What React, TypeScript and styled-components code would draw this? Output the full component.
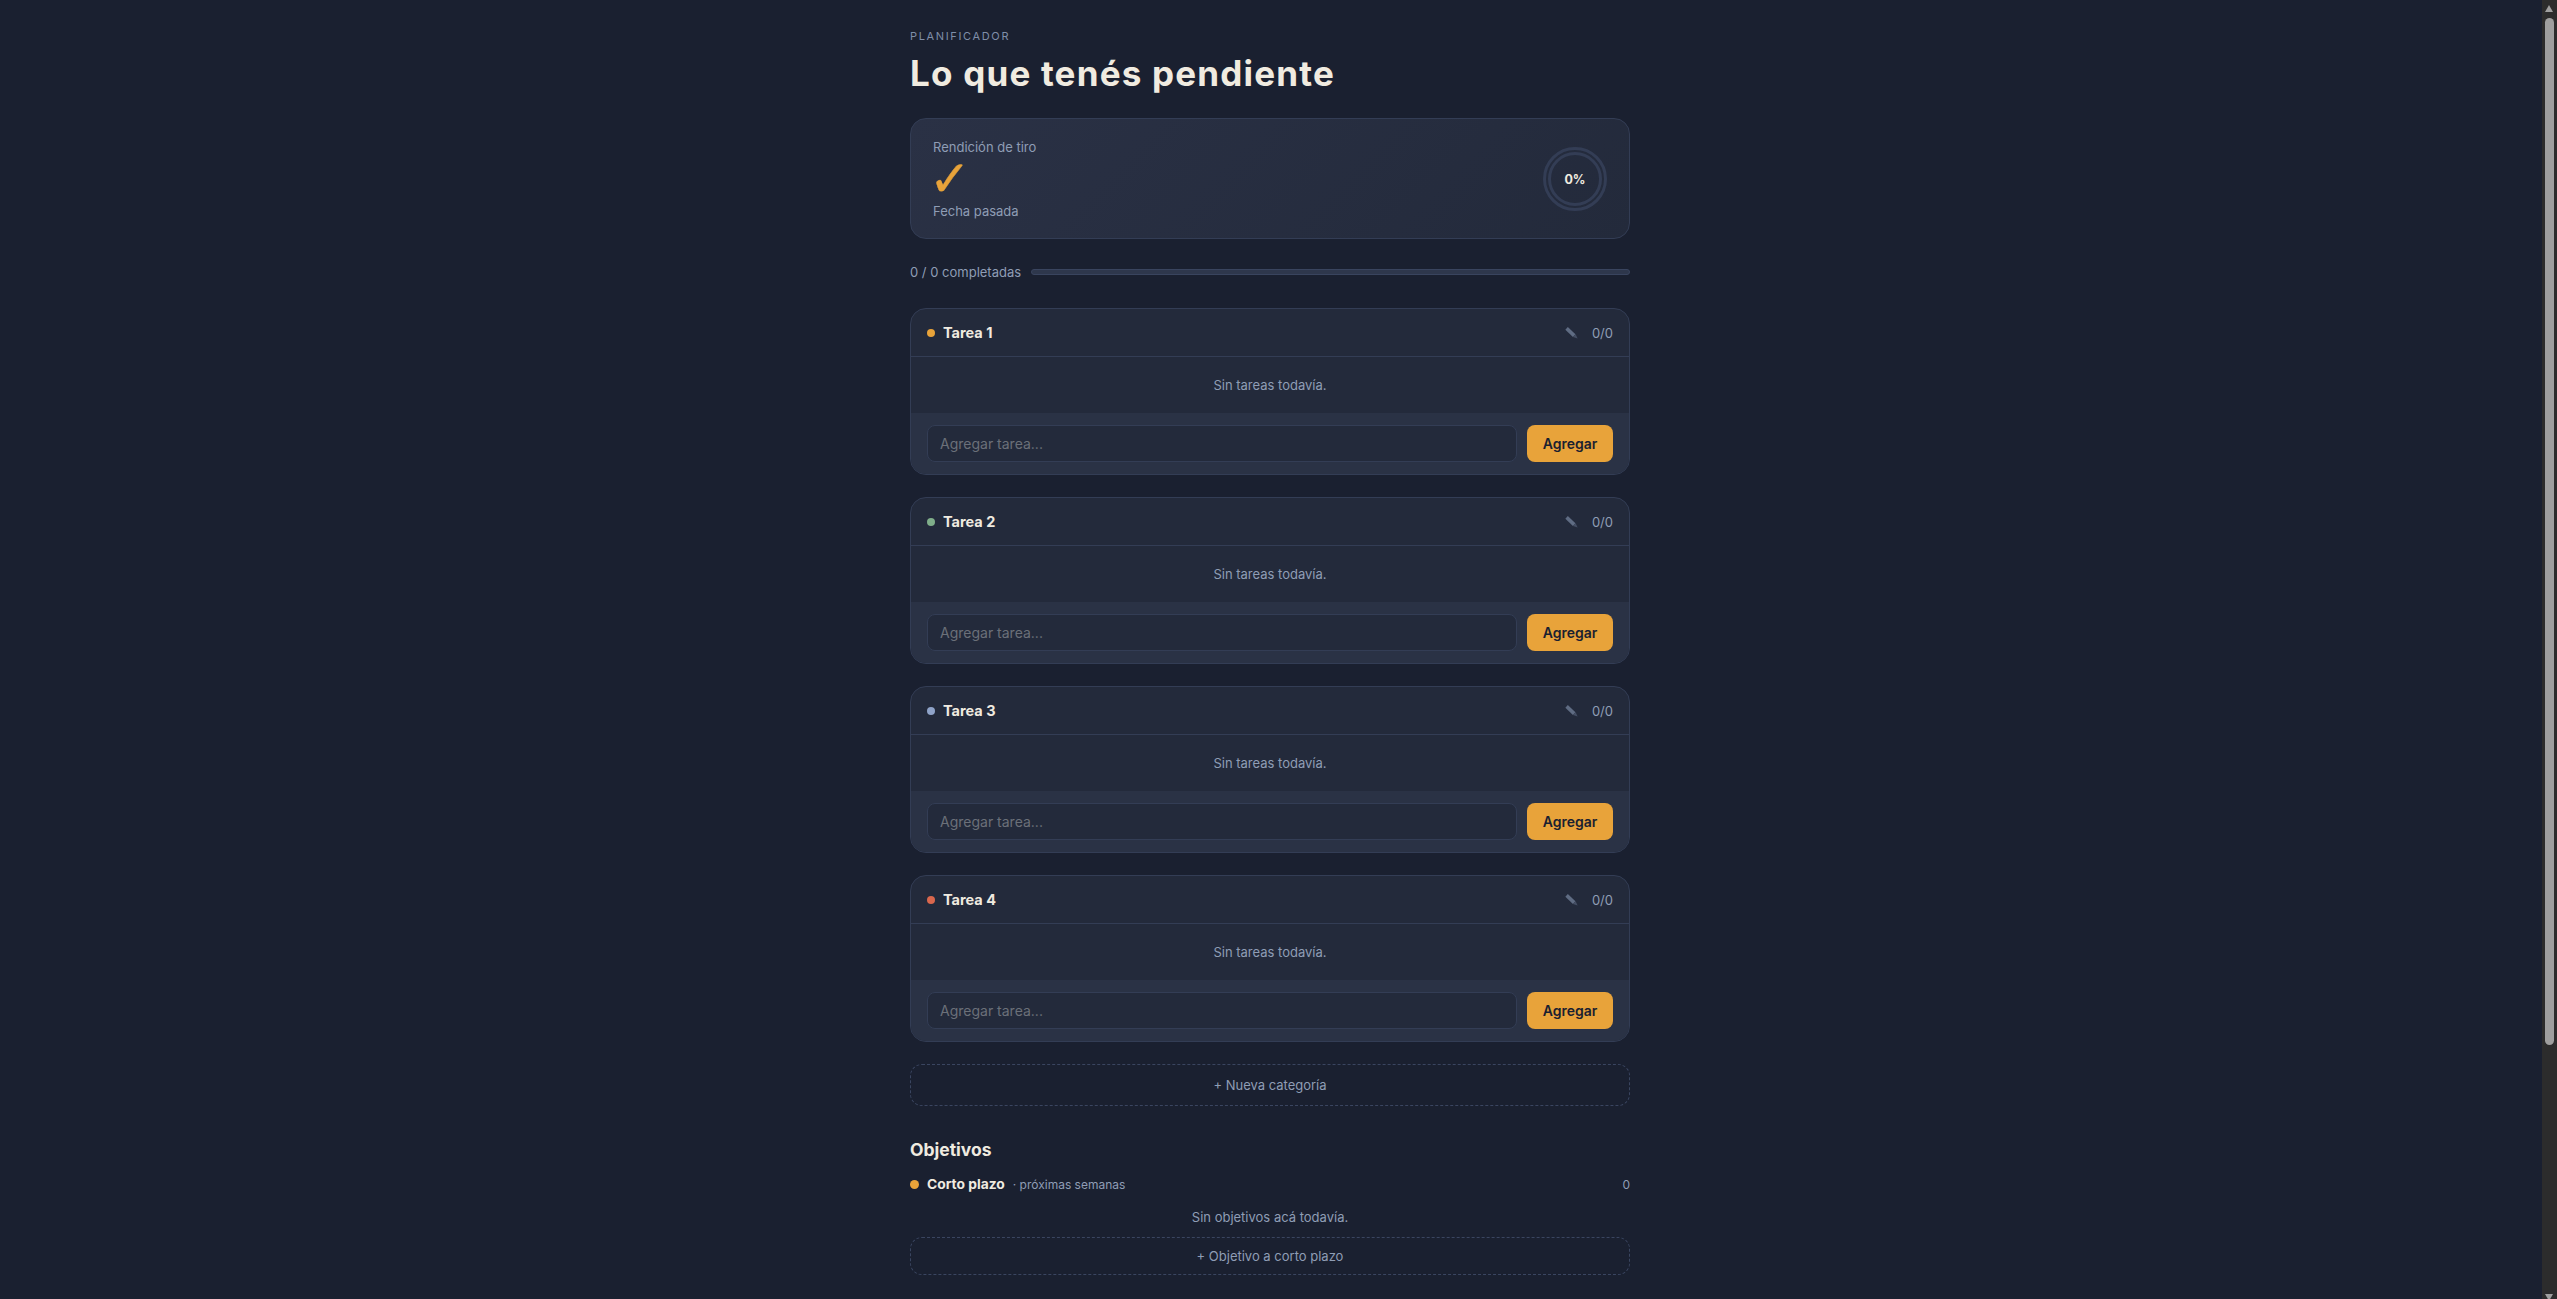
import React, {FC} from "react";
import styled, {createGlobalStyle} from "styled-components";

const GlobalStyle = createGlobalStyle`
  body {
    margin: 0;
    background: #1a2030;
    color: #8f9db5;
    font-family: Inter, "Liberation Sans", sans-serif;
  }
  * {
    box-sizing: border-box;
  }
`;

const Page = styled.div`
  padding-right: 17px;
`;

const Main = styled.main`
  width: 720px;
  min-height: 1605px;
  margin: 0 auto;
  padding-top: 28px;
`;

const Eyebrow = styled.div`
  font-size: 11px;
  line-height: 16px;
  letter-spacing: 0.15em;
  color: #7f8ea8;
`;

const Title = styled.h1`
  margin: 7px 0 0;
  font-size: 35px;
  line-height: 44px;
  font-weight: 700;
  letter-spacing: 1.2px;
  color: #f0ebe0;
`;

const Hero = styled.section`
  display: flex;
  align-items: center;
  justify-content: space-between;
  height: 121px;
  margin-top: 23px;
  padding: 0 22px;
  border: 1px solid #333d55;
  border-radius: 16px;
  background: linear-gradient(135deg, #2a3145, #232a3b);
`;

const HeroText = styled.div`
  display: flex;
  flex-direction: column;
  font-size: 13px;
  line-height: 20px;
`;

const HeroCheck = styled.div`
  height: 44px;
  margin-left: -4px;
  font-family: "DejaVu Sans", sans-serif;
  font-size: 50px;
  line-height: 44px;
  color: #e8a33a;
  -webkit-text-stroke: 0.4px #e8a33a;
`;

const Ring = styled.div`
  position: relative;
  display: flex;
  align-items: center;
  justify-content: center;
  width: 64px;
  height: 64px;
  padding-top: 1px;
  font-size: 12.5px;
  font-weight: 700;
  color: #f0ebe0;

  svg {
    position: absolute;
    inset: 0;
  }
`;

const ProgressRow = styled.div`
  display: flex;
  align-items: center;
  gap: 10px;
  height: 22px;
  margin-top: 22px;
  font-size: 13px;
  white-space: nowrap;
`;

const ProgressTrack = styled.div`
  flex: 1;
  height: 6px;
  border: 1px solid #39445e;
  border-radius: 3px;
  background: #2e374c;
`;

const Categories = styled.div`
  display: flex;
  flex-direction: column;
  gap: 22px;
  margin-top: 25px;
`;

const Card = styled.section`
  border: 1px solid #333d55;
  border-radius: 16px;
  background: #232a3b;
  overflow: hidden;
`;

const CardHeader = styled.header`
  display: flex;
  align-items: center;
  gap: 8px;
  height: 48px;
  padding: 0 16px;
  border-bottom: 1px solid #333d55;
`;

const Dot = styled.span<{ $color: string; $size: number }>`
  flex: none;
  width: ${(props) => props.$size}px;
  height: ${(props) => props.$size}px;
  border-radius: 50%;
  background: ${(props) => props.$color};
`;

const CardName = styled.span`
  flex: 1;
  font-size: 14.5px;
  font-weight: 700;
  color: #f0ebe0;
`;

const EditIcon = styled.svg`
  flex: none;
  margin-right: 6px;
`;

const Count = styled.span`
  font-size: 13px;
  color: #8f9db5;
`;

const Empty = styled.div`
  display: flex;
  align-items: center;
  justify-content: center;
  height: 56px;
  font-size: 13px;
`;

const AddRow = styled.form`
  display: flex;
  gap: 10px;
  padding: 12px 16px;
  background: #2a3245;
`;

const AddInput = styled.input`
  flex: 1;
  height: 37px;
  padding: 0 12px;
  border: 1px solid #333d55;
  border-radius: 8px;
  background: #232a3b;
  color: #f0ebe0;
  font: 14px Inter, sans-serif;

  &::placeholder {
    color: #6b7079;
  }
`;

const AddButton = styled.button`
  width: 86px;
  height: 37px;
  border: 0;
  border-radius: 8px;
  background: #e8a33a;
  color: #1a2030;
  font: 600 14px Inter, sans-serif;
`;

const DashedButton = styled.button<{ $height: number }>`
  display: block;
  width: 100%;
  height: ${(props) => props.$height}px;
  border: 1px dashed #3a4560;
  border-radius: 12px;
  background: transparent;
  color: #8f9db5;
  font: 13px Inter, sans-serif;
`;

const NewCategory = styled.div`
  margin-top: 22px;
`;

const SectionTitle = styled.h2`
  margin: 32px 0 0;
  font-size: 17.5px;
  line-height: 24px;
  font-weight: 700;
  color: #f0ebe0;
`;

const GoalHeader = styled.div`
  display: flex;
  align-items: center;
  gap: 8px;
  height: 20px;
  margin-top: 12px;
  font-size: 12px;
`;

const GoalName = styled.span`
  font-size: 13.8px;
  font-weight: 700;
  color: #f0ebe0;
`;

const GoalHint = styled.span`
  flex: 1;
`;

const GoalEmpty = styled.div`
  margin: 13px 0 10px;
  font-size: 13px;
  line-height: 20px;
  text-align: center;
`;

const Scrollbar = styled.div`
  position: fixed;
  top: 0;
  right: 0;
  bottom: 0;
  width: 15px;
  background: #2c2c2c;
`;

const ScrollThumb = styled.div`
  position: absolute;
  top: 18px;
  left: 3px;
  width: 9px;
  height: 1027px;
  border-radius: 5px;
  background: #9f9f9f;
`;

const ScrollArrow = styled.div<{ $down?: boolean }>`
  position: absolute;
  left: 3px;
  width: 0;
  height: 0;
  border-left: 4.5px solid transparent;
  border-right: 4.5px solid transparent;
  ${(props) => props.$down
    ? "bottom: -2px; border-top: 7px solid #9f9f9f;"
    : "top: 5px; border-bottom: 7px solid #9f9f9f;"}
`;

interface Category {
    name: string;
    color: string;
}

const categories: Category[] = [
    {name: "Tarea 1", color: "#e8a33a"},
    {name: "Tarea 2", color: "#7fae8a"},
    {name: "Tarea 3", color: "#8fa3c8"},
    {name: "Tarea 4", color: "#d9674d"},
];

const CategoryCard: FC<Category> = ({name, color}) => (
    <Card>
        <CardHeader>
            <Dot $color={color} $size={8}/>
            <CardName>{name}</CardName>
            <EditIcon width="13" height="12" viewBox="0 0 13 12" fill="none">
                <path d="M1.6 1.4 9.2 8.6" stroke="#5f6c83" strokeWidth="3.6"/>
                <path d="M8 10 10.6 7.2 12.6 11.6Z" fill="#454f64"/>
            </EditIcon>
            <Count>0/0</Count>
        </CardHeader>
        <Empty>Sin tareas todavía.</Empty>
        <AddRow>
            <AddInput placeholder="Agregar tarea..."/>
            <AddButton type="button">Agregar</AddButton>
        </AddRow>
    </Card>
);

const App: FC = () => (
    <>
        <GlobalStyle/>
        <Page>
            <Main>
                <Eyebrow>PLANIFICADOR</Eyebrow>
                <Title>Lo que tenés pendiente</Title>
                <Hero>
                    <HeroText>
                        <span>Rendición de tiro</span>
                        <HeroCheck>✓</HeroCheck>
                        <span>Fecha pasada</span>
                    </HeroText>
                    <Ring>
                        <svg width="64" height="64" viewBox="0 0 64 64" fill="none" stroke="#333d55" strokeWidth="3">
                            <circle cx="32" cy="32" r="30.5"/>
                            <circle cx="32" cy="32" r="25.5"/>
                        </svg>
                        0%
                    </Ring>
                </Hero>
                <ProgressRow>
                    0 / 0 completadas
                    <ProgressTrack/>
                </ProgressRow>
                <Categories>
                    {categories.map((category) => (
                        <CategoryCard key={category.name} {...category}/>
                    ))}
                </Categories>
                <NewCategory>
                    <DashedButton type="button" $height={42}>+ Nueva categoría</DashedButton>
                </NewCategory>
                <SectionTitle>Objetivos</SectionTitle>
                <GoalHeader>
                    <Dot $color="#e8a33a" $size={9}/>
                    <GoalName>Corto plazo</GoalName>
                    <GoalHint>· próximas semanas</GoalHint>
                    <span>0</span>
                </GoalHeader>
                <GoalEmpty>Sin objetivos acá todavía.</GoalEmpty>
                <DashedButton type="button" $height={38}>+ Objetivo a corto plazo</DashedButton>
            </Main>
        </Page>
        <Scrollbar aria-hidden="true">
            <ScrollArrow/>
            <ScrollThumb/>
            <ScrollArrow $down/>
        </Scrollbar>
    </>
);

export default App;
